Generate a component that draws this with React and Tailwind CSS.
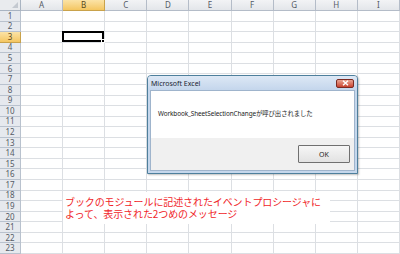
import React from "react";

const cols = ["A", "B", "C", "D", "E", "F", "G", "H", "I"];
const rows = Array.from({ length: 23 }, (_, i) => i + 1);

export default function App() {
  return (
    <div className="relative w-[400px] h-[254px] overflow-hidden bg-white font-['Noto_Sans','Noto_Sans_CJK_JP',sans-serif]">
      <div className="grid w-[400px] h-[254px] grid-cols-[21px_repeat(9,1fr)] grid-rows-[11px_repeat(23,1fr)]">
        <div className="relative bg-[#e9ebee] border-r border-b border-[#a9b4c2]">
          <div className="absolute right-[2px] bottom-[2px] w-0 h-0 border-l-[6px] border-l-transparent border-b-[6px] border-b-[#c4c9d0]" />
        </div>
        {cols.map((c) => (
          <div
            key={c}
            className={
              c === "B"
                ? "flex items-center justify-center text-[8px] leading-none text-[#5a4a20] bg-gradient-to-b from-[#fbe3a6] to-[#f4c660] border-r border-b border-[#c9a24b]"
                : "flex items-center justify-center text-[8px] leading-none text-[#555b66] bg-gradient-to-b from-[#f2f3f5] to-[#e3e6ea] border-r border-b border-[#b4bcc8]"
            }
          >
            {c}
          </div>
        ))}
        {rows.map((r) => (
          <React.Fragment key={r}>
            <div
              className={
                r === 3
                  ? "flex items-center justify-center text-[8px] leading-none text-[#5a4a20] bg-gradient-to-b from-[#fbe3a6] to-[#f4c660] border-r border-b border-[#c9a24b]"
                  : "flex items-center justify-center text-[8px] leading-none text-[#555b66] bg-[#e6e9ee] border-r border-b border-[#b9c2ce]"
              }
            >
              {r}
            </div>
            {cols.map((c) => (
              <div key={c} className="relative border-r border-b border-[#dcdfe3]">
                {r === 3 && c === "B" && (
                  <div className="absolute -left-[1px] -top-[1px] right-0 bottom-0 border-2 border-black">
                    <div className="absolute -right-[3px] -bottom-[3px] w-[4px] h-[4px] bg-black border border-white" />
                  </div>
                )}
              </div>
            ))}
          </React.Fragment>
        ))}
      </div>

      {/* Text box */}
      <div className="absolute left-[63px] top-[192px] w-[267px] h-[32px] bg-white px-[2px] pt-[4px] text-[10px] leading-[12px] text-[#f01e28] font-['Noto_Sans_CJK_JP',sans-serif] tracking-[-0.1px]">
        <div>ブックのモジュールに記述されたイベントプロシージャに</div>
        <div>よって、表示された2つめのメッセージ</div>
      </div>

      {/* Dialog */}
      <div className="absolute left-[147px] top-[75px] w-[211px] h-[99px] flex flex-col rounded-t-[4px] border border-[#4e7f9c] bg-[#c5d7ec] shadow-[1px_1px_2px_rgba(0,0,0,0.25)]">
        <div className="h-[14px] flex items-center justify-between px-[3px] bg-gradient-to-b from-[#dde8f5] to-[#c4d6ec] rounded-t-[3px]">
          <span className="text-[7px] leading-none text-[#1b2430]">Microsoft Excel</span>
          <div className="w-[18px] h-[9px] rounded-[2px] border border-[#7a2a22] bg-gradient-to-b from-[#e9a392] to-[#c8412f] flex items-center justify-center">
            <svg width="7" height="6" viewBox="0 0 7 6">
              <path d="M1 0.8 L6 5.2 M6 0.8 L1 5.2" stroke="white" strokeWidth="1.4" />
            </svg>
          </div>
        </div>
        <div className="flex-1 flex flex-col mx-[2px] mb-[2px] border border-[#9fb4cc]">
          <div className="h-[47px] bg-white flex items-center pl-[7px]">
            <span className="text-[6.4px] leading-none text-[#222] tracking-[-0.1px]">Workbook_SheetSelectionChangeが呼び出されました</span>
          </div>
          <div className="flex-1 bg-[#f0f0f0] flex items-center justify-end pr-[4px]">
            <div className="w-[52px] h-[18px] border border-[#707070] rounded-[1px] bg-gradient-to-b from-[#f6f6f6] to-[#e2e2e2] flex items-center justify-center text-[7px] leading-none text-[#222]">
              OK
            </div>
          </div>
        </div>
      </div>
    </div>
  );
}
